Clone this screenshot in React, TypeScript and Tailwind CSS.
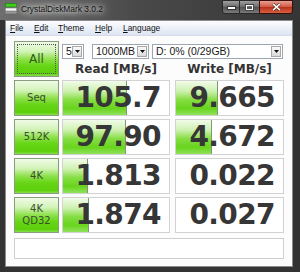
import React from "react";

const btnBg =
  "bg-[linear-gradient(to_bottom,#f0fbe6_0%,#d2f3b8_28%,#8fe14c_50%,#66d516_70%,#5ccf0a_92%,#86df4c_100%)]";
const barBg =
  "bg-[linear-gradient(to_bottom,#f2fbea_0%,#cdf1b0_30%,#86dd44_55%,#68d41c_80%,#8fe25c_100%)]";

function Combo({ text, w }: { text: string; w: string }) {
  return (
    <div className={`${w} h-[15px] border border-[#9ea6b0] bg-white flex items-center`}>
      <span className="pl-[3px] text-[10.5px] leading-none text-[#1a1a1a] font-['Liberation_Sans',Arial,sans-serif]">
        {text}
      </span>
      <div className="ml-auto mr-[1px] w-[10px] h-[11px] border border-[#a8a8a8] bg-[linear-gradient(to_bottom,#fafafa,#d9d9d9)] flex items-center justify-center">
        <svg width="5" height="3" viewBox="0 0 5 3">
          <path d="M0 0H5L2.5 3Z" fill="#111" />
        </svg>
      </div>
    </div>
  );
}

function SideButton({ children, focus }: { children: React.ReactNode; focus?: boolean }) {
  return (
    <div
      className={`w-[45px] h-full shrink-0 border border-[#8a9c80] ${btnBg} flex items-center justify-center p-[2px]`}
    >
      <div
        className={`w-full h-full flex flex-col items-center justify-center ${
          focus ? "border border-dotted border-[#555]" : ""
        }`}
      >
        {children}
      </div>
    </div>
  );
}

function Cell({ value, bar, w, ml }: { value: string; bar: number; w: string; ml: string }) {
  return (
    <div className={`relative ${w} ${ml} h-full shrink-0 border border-[#d2d2d2] bg-white overflow-hidden flex items-center justify-end`}>
      {bar > 0 && (
        <div
          className={`absolute left-0 top-0 bottom-0 ${barBg} border-r border-[#7f9a70]`}
          style={{ width: `${bar}px` }}
        />
      )}
      <span className="relative pr-[8px] text-[28px] leading-none font-bold text-[#363636] tracking-[-0.6px] font-['DejaVu_Sans',Verdana,sans-serif]">
        {value}
      </span>
    </div>
  );
}

const rows = [
  { label: ["Seq"], r: "105.7", rb: 64, w: "9.665", wb: 42 },
  { label: ["512K"], r: "97.90", rb: 63, w: "4.672", wb: 36 },
  { label: ["4K"], r: "1.813", rb: 25, w: "0.022", wb: 0 },
  { label: ["4K", "QD32"], r: "1.874", rb: 26, w: "0.027", wb: 0 },
];

export default function App() {
  return (
    <div className="w-[300px] h-[272px] bg-[#333333] flex flex-col overflow-hidden font-['Liberation_Sans',Arial,sans-serif]">
      {/* title bar */}
      <div className="h-[20px] shrink-0 flex items-start bg-[linear-gradient(to_right,#6e6e6e,#4a4a4a_45%,#353535)]">
        <svg className="ml-[5px] mt-[3px]" width="12" height="11" viewBox="0 0 12 11">
          <rect x="0.5" y="0.5" width="11" height="3.5" fill="#3ecf1e" stroke="#1d7a0e" strokeWidth="0.6" />
          <rect x="0.5" y="5" width="11" height="3" fill="#f4f4f4" stroke="#888" strokeWidth="0.6" />
          <rect x="0.5" y="8.5" width="11" height="2" fill="#9a9a9a" />
        </svg>
        <span className="ml-[4px] mt-[5px] text-[8.4px] leading-none text-[#101010] [text-shadow:0_0_4px_#f0f0f0,0_0_8px_#dcdcdc,0_0_10px_#cfcfcf]">
          CrystalDiskMark 3.0.2
        </span>
        <div className="ml-auto mr-[7px] flex">
          <div className="w-[18px] h-[14px] rounded-bl-[3px] border border-[#2a2a2a] bg-[linear-gradient(to_bottom,#9e9e9e,#6a6a6a_50%,#505050_51%,#7a7a7a)] flex items-end justify-center pb-[3px]">
            <div className="w-[7px] h-[2px] bg-white border border-[#333] box-content" />
          </div>
          <div className="w-[19px] h-[14px] border-y border-[#2a2a2a] bg-[linear-gradient(to_bottom,#9e9e9e,#6a6a6a_50%,#505050_51%,#7a7a7a)] flex items-center justify-center">
            <div className="w-[7px] h-[5px] border border-white outline outline-1 outline-[#444]" />
          </div>
          <div className="w-[34px] h-[14px] rounded-br-[3px] border border-[#3a0d08] bg-[linear-gradient(to_bottom,#e8a092,#d05a44_48%,#b8301c_52%,#d8603e)] flex items-center justify-center">
            <svg width="9" height="8" viewBox="0 0 9 8">
              <path d="M1 0.8L8 7.2M8 0.8L1 7.2" stroke="#3a1008" strokeWidth="2.6" />
              <path d="M1 0.8L8 7.2M8 0.8L1 7.2" stroke="#fff" strokeWidth="1.6" />
            </svg>
          </div>
        </div>
      </div>

      {/* client */}
      <div className="h-[247px] ml-[5px] mr-[7px] border border-[#8c8c8c] bg-[#fcfcfc] flex flex-col">
        {/* menu bar */}
        <div className="h-[15px] shrink-0 border-b border-[#d4dcea] bg-[linear-gradient(to_bottom,#fdfdfe,#e9eef7_60%,#dde5f2)] flex items-center pl-[4px] text-[8.4px] leading-none text-[#111]">
          <span className="w-[24px]"><span className="underline underline-offset-1">F</span>ile</span>
          <span className="w-[24px]"><span className="underline underline-offset-1">E</span>dit</span>
          <span className="w-[37px]"><span className="underline underline-offset-1">T</span>heme</span>
          <span className="w-[28px]"><span className="underline underline-offset-1">H</span>elp</span>
          <span><span className="underline underline-offset-1">L</span>anguage</span>
        </div>

        {/* content */}
        <div className="flex flex-col pl-[8px] pt-[5px] gap-[3px]">
          <div className="h-[36px] flex">
            <SideButton focus>
              <span className="text-[12px] leading-none text-[#2f5a1a] font-['DejaVu_Sans',sans-serif]">All</span>
            </SideButton>
            <div className="ml-[3px] w-[222px] flex flex-col">
              <div className="mt-[3px] flex">
                <Combo text="5" w="w-[22px]" />
                <div className="ml-[8px]"><Combo text="1000MB" w="w-[57px]" /></div>
                <div className="ml-[3px]"><Combo text="D: 0% (0/29GB)" w="w-[131px]" /></div>
              </div>
              <div className="flex-1 flex items-center pt-[2px] text-[12px] font-bold text-[#333] font-['DejaVu_Sans',Verdana,sans-serif] leading-none">
                <div className="w-[108px] text-center">Read [MB/s]</div>
                <div className="ml-[5px] w-[109px] text-center">Write [MB/s]</div>
              </div>
            </div>
          </div>

          {rows.map((row) => (
            <div key={row.r} className="h-[36px] flex">
              <SideButton>
                {row.label.map((l) => (
                  <span key={l} className="text-[10px] leading-[12px] text-[#3a4f2e] font-['DejaVu_Sans',sans-serif]">
                    {l}
                  </span>
                ))}
              </SideButton>
              <Cell value={row.r} bar={row.rb} w="w-[108px]" ml="ml-[3px]" />
              <Cell value={row.w} bar={row.wb} w="w-[109px]" ml="ml-[5px]" />
            </div>
          ))}

          <div className="mt-[2px] w-[270px] h-[21px] border border-[#cfcfcf] bg-white" />
        </div>
      </div>
    </div>
  );
}
